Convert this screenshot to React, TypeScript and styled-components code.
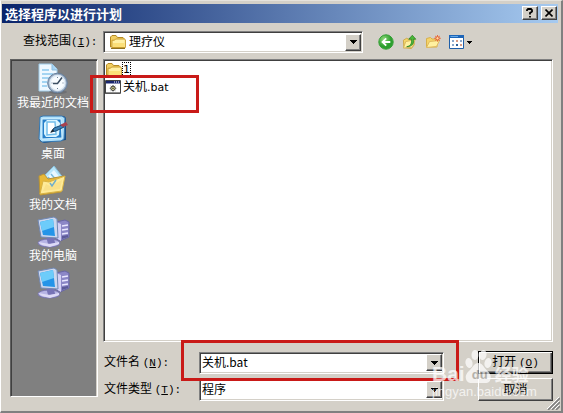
import React from "react";
import styled, { createGlobalStyle } from "styled-components";

const cjk = '"Noto Sans CJK SC", sans-serif';
const face = "#d4d0c8";

const GlobalStyle = createGlobalStyle`
  * { box-sizing: border-box; }
  body { margin: 0; background: ${face}; font: 12px/16px ${cjk}; color: #000; }
  button, input, select { font: inherit; color: inherit; border-radius: 0; }
`;

const Dialog = styled.main`
  position: relative;
  display: flex;
  flex-direction: column;
  min-height: 100vh;
  padding: 2px 1px 0 0;
  background: ${face};
  border: 1px solid;
  border-color: #e6e3dd #808080 #808080 #fff;
  border-right-width: 2px;
  border-bottom-width: 2px;
`;

const TitleBar = styled.header`
  display: flex;
  align-items: center;
  gap: 3px;
  height: 19px;
  margin: 1px 2px 0 1px;
  padding: 0 1px 0 3px;
  background: linear-gradient(90deg, #0a246a, #a6caf0);
`;

const Title = styled.h1`
  flex: 1;
  margin: 0;
  font-size: 13px;
  line-height: 17px;
  font-weight: 700;
  color: #fff;
`;

const CaptionButton = styled.button`
  display: grid;
  place-items: center;
  width: 16px;
  height: 14px;
  margin-bottom: 1px;
  padding: 0;
  background: ${face};
  border: 1px solid;
  border-color: #fff #404040 #404040 #fff;
  box-shadow: inset -1px -1px #808080;
`;

const Toolbar = styled.div`
  display: flex;
  align-items: center;
  padding: 8px 10px 6px 22px;
`;

const Mono = styled.span`
  font-family: "Liberation Mono", monospace;
  font-size: 11px;
`;

const Label = styled.label<{ $width?: number }>`
  flex: none;
  width: ${(p) => (p.$width ? `${p.$width}px` : "auto")};
  line-height: 14px;
  padding-bottom: 2px;
  white-space: nowrap;
`;

const Combo = styled.div<{ $fixed?: boolean }>`
  display: flex;
  align-items: center;
  position: relative;
  flex: ${(p) => (p.$fixed ? "0 1 260px" : "1")};
  min-width: 0;
  height: 22px;
  padding: 1px;
  background: #fff;
  border: 1px solid;
  border-color: #808080 #fff #fff #808080;
  box-shadow: inset 1px 1px #404040, inset -1px -1px ${face};
`;

const comboText = `
  flex: 1;
  min-width: 0;
  height: 18px;
  border: 0;
  padding: 0 1px 2px;
  background: transparent;
  outline: 0;
  appearance: none;
`;
const ComboSelect = styled.select`${comboText}`;
const ComboInput = styled.input`${comboText}`;

const ComboIcon = styled.span`
  display: flex;
  padding: 0 2px 0 4px;
`;

const DropButton = styled.button`
  display: grid;
  place-items: center;
  flex: none;
  width: 16px;
  height: 17px;
  padding: 0;
  background: ${face};
  border: 1px solid;
  border-color: #fff #404040 #404040 #fff;
  box-shadow: inset -1px -1px #808080;
`;

const Tools = styled.nav`
  display: flex;
  align-items: center;
  gap: 8px;
  margin-left: 15px;
`;

const ToolButton = styled.button`
  display: flex;
  align-items: center;
  gap: 3px;
  padding: 0;
  border: 0;
  background: none;
`;

const Body = styled.div`
  display: flex;
  flex: 1;
  gap: 5px;
  padding: 0 7px 10px 9px;
`;

const Places = styled.nav`
  display: flex;
  flex-direction: column;
  align-items: center;
  flex: none;
  gap: 5px;
  width: 88px;
  margin-bottom: 4px;
  padding: 3px 2px 0 0;
  background: #808080;
  border: 1px solid;
  border-color: #606060 #fff #fff #606060;
  box-shadow: inset 1px 1px #404040, inset -1px 0 ${face};
`;

const Place = styled.button`
  display: flex;
  flex-direction: column;
  align-items: center;
  padding: 0;
  line-height: 14px;
  color: #fff;
  border: 0;
  background: none;
  white-space: nowrap;
`;

const Main = styled.div`
  display: flex;
  flex: 1;
  flex-direction: column;
  gap: 9px;
  min-width: 0;
`;

const FileList = styled.ul`
  flex: 1;
  margin: 0;
  padding: 1px;
  list-style: none;
  background: #fff;
  border: 1px solid;
  border-color: #808080 #fff #fff #808080;
  box-shadow: inset 1px 1px #404040, inset -1px -1px ${face};
`;

const FileRow = styled.li`
  display: flex;
  align-items: center;
  height: 17px;
`;

const FileName = styled.span<{ $focused?: boolean }>`
  padding: 0 1px;
  line-height: 15px;
  font-family: "DejaVu Sans", ${cjk};
  font-size: 11px;
  outline: ${(p) => (p.$focused ? "1px dotted #000" : "none")};
  outline-offset: -1px;
`;

const Hanzi = styled.span`
  font-family: ${cjk};
  font-size: 12px;
`;

const Form = styled.form`
  display: flex;
  flex-direction: column;
  gap: 4px;
`;

const Field = styled.div`
  display: flex;
  align-items: center;
  height: 23px;
  padding-left: 1px;
`;

const PushButton = styled.button<{ $primary?: boolean }>`
  flex: none;
  width: 75px;
  height: 23px;
  margin-left: 34px;
  padding: 0 0 2px;
  line-height: 14px;
  background: ${face};
  border: 1px solid;
  border-color: ${(p) => (p.$primary ? "#000" : "#fff #404040 #404040 #fff")};
  box-shadow: ${(p) =>
    p.$primary
      ? "inset 1px 1px #fff, inset -1px -1px #404040, inset -2px -2px #808080"
      : "inset -1px -1px #808080"};
`;

const Grip = styled.svg`
  position: absolute;
  right: 1px;
  bottom: 1px;
`;

const Highlight = styled.div<{ $x: number; $y: number; $w: number; $h: number }>`
  position: absolute;
  left: ${(p) => p.$x}px;
  top: ${(p) => p.$y}px;
  width: ${(p) => p.$w}px;
  height: ${(p) => p.$h}px;
  border: 3px solid #c91a18;
  pointer-events: none;
`;

const Watermark = styled.div`
  position: absolute;
  right: 28px;
  bottom: 12px;
  width: 101px;
  color: #fff;
  opacity: 0.72;
  pointer-events: none;
  white-space: nowrap;
`;

const Brand = styled.div`
  display: flex;
  align-items: flex-end;
  height: 35px;
  font: 700 21px/20px "Liberation Sans", sans-serif;
`;

const BrandHanzi = styled.span`
  margin-left: 3px;
  font: 700 17px/20px ${cjk};
`;

const Paw = styled.div`
  position: relative;
  width: 27px;
  height: 35px;
`;

const PawText = styled.span`
  position: absolute;
  left: 7px;
  bottom: 1px;
  color: #aaa69f;
  font-size: 13px;
  line-height: 16px;
`;

const Site = styled.div`
  font: 13px/15px "Liberation Sans", sans-serif;
`;

const Arrow = ({ small }: { small?: boolean }) => (
  <svg width={small ? 5 : 7} height={small ? 3 : 4} viewBox="0 0 7 4" shapeRendering="crispEdges">
    <path d="M0 0h7v1H6v1H5v1H4v1H3V3H2V2H1V1H0z" />
  </svg>
);

const FolderIcon = () => (
  <svg width="17" height="16" viewBox="0 0 17 16">
    <path d="M1.500 13V3l1.500-1.500h4L8.500 3.500h5.500l1 1V13z" fill="#f2cf63" stroke="#b58a24" />
    <path d="M3 13V6.200h2.500l1-1.200h9l.9.9v7.600H3z" fill="#fff0a4" stroke="#c99c2f" />
    <path d="M4 9h11.500v4H4z" fill="#fbdf78" />
    <path d="M2 14.500h14" stroke="#8e711f" />
  </svg>
);

const BatchIcon = () => (
  <svg width="17" height="14" viewBox="0 0 17 14">
    <path d="M.5.5h15v12.500H.5z" fill="#fff" stroke="#444" />
    <path d="M1 1h14v2.500H1z" fill="#18256e" />
    <path d="M9 2h1m1 0h1m1 0h1" stroke="#fff" />
    <path d="M0 13.300h15.500V1" stroke="#444" fill="none" />
    <circle cx="8" cy="8.300" r="2.200" fill="#e1dd98" stroke="#333" />
    <path d="M8 5v1m0 4.600v1M4.700 8.300h1m4.600 0h1M5.700 6l.6.600m3.400 3.400.6.600m0-4.600-.6.600M6.300 10l-.6.600" stroke="#444" strokeWidth=".8" />
    <circle cx="8" cy="8.300" r=".8" fill="#222" />
  </svg>
);

const BackIcon = () => (
  <svg width="16" height="16" viewBox="0 0 16 16">
    <defs>
      <radialGradient id="green" cx=".35" cy=".3">
        <stop stopColor="#8ed77a" />
        <stop offset="1" stopColor="#2c9f2d" />
      </radialGradient>
    </defs>
    <circle cx="8" cy="8" r="7.200" fill="url(#green)" stroke="#36a037" />
    <path d="M12.300 8H4.800M8.200 4.300 4.500 8l3.700 3.700" fill="none" stroke="#fff" strokeWidth="1.800" />
  </svg>
);

const UpIcon = () => (
  <svg width="15" height="16" viewBox="0 0 16 16">
    <path d="M1.500 6 5 4l2 1 6-1v7l-3 4-8-1z" fill="#f5d668" stroke="#cca747" />
    <path d="m1.500 14.500 2.500-7L14 5.500l-3 8z" fill="#fff1a0" stroke="#d5b45a" />
    <path d="M5 13c5-1 5.500-4 5-8H7.200L11 .8 14.700 5h-2.500c.8 4-.8 8-7.200 8z" fill="#4bb939" stroke="#267f20" strokeWidth=".8" />
  </svg>
);

const NewFolderIcon = () => (
  <svg width="16" height="16" viewBox="0 0 16 16">
    <path d="M1.500 13V4.500l4-1 1.500 1.500H12V13z" fill="#f5d46a" stroke="#d7b04a" />
    <path d="m1.500 13.500 3-6 10-1-3 6z" fill="#fff0a0" stroke="#dfb95f" />
    <path d="M12.500 1v6.600M9.200 4.300h6.600M10.200 2l4.600 4.600m0-4.600-4.600 4.600" stroke="#e96a3b" />
    <circle cx="12.500" cy="4.300" r="1.700" fill="#ffd99a" stroke="#e35b31" />
  </svg>
);

const ViewsIcon = () => (
  <svg width="15" height="14" viewBox="0 0 15 14">
    <path d="M.5.5h14v13H.5z" fill="#fff" stroke="#1f5fa9" />
    <path d="M0 0h15v3H0z" fill="#1d65b8" />
    <path d="M1.500 1.500H9" stroke="#65a9e8" />
    <path d="M3 5h2v2H3zM11 5h2v2h-2zM3 9h2v2H3z" fill="#8aa8cb" />
    <path d="M7 5h2v2H7zM11 9h2v2h-2z" fill="#d89c85" />
    <path d="M7 9h2v2H7z" fill="#30619a" />
  </svg>
);

const RecentIcon = () => (
  <svg width="32" height="32" viewBox="0 0 32 32">
    <path d="M2 1h13l5 5v22H2z" fill="#eef8ff" stroke="#a0cdea" />
    <path d="M15 1v6h5" fill="#a5d4f4" stroke="#8dbfe2" />
    <path d="M5 7h7M5 11h11M5 15h8M5 19h5M5 23h5" stroke="#8ac7ee" strokeWidth="1.500" />
    <ellipse cx="21" cy="29" rx="9" ry="2" fill="#5b6068" opacity=".5" />
    <circle cx="20.500" cy="20" r="9.800" fill="#9aadc4" stroke="#657f9c" />
    <circle cx="20.500" cy="20" r="7.500" fill="#f8fcff" stroke="#dfebf5" strokeWidth="1.500" />
    <path d="m25 14.500-4.500 6H16" fill="none" stroke="#3b4e62" strokeWidth="1.500" />
    <path d="M20.500 14v1m0 10v1m-6-6h1m10 0h1" stroke="#6b8196" />
  </svg>
);

const DesktopIcon = () => (
  <svg width="32" height="32" viewBox="0 0 32 32">
    <path d="m4 3 23-1 2 2v22l-22 3-4-2z" fill="#174f87" />
    <path d="m3 3 3-1h19l3 2-1 21-3 2-19 1-3-3z" fill="#b1e1fb" stroke="#3477b1" />
    <path d="M5 5h19l1 19-20 1z" fill="#257fc9" stroke="#d5f1ff" />
    <path d="m7 9 3-3h10l3 3-1 12-3 2H9l-2-3z" fill="#d9f4ff" />
    <path d="M10 8h8l1 12-9 1z" fill="#fff" stroke="#71bdea" strokeWidth="1.500" />
    <path d="m14 18 3-4 8-3 2 2-8 4z" fill="#3d82b7" stroke="#174a74" />
    <path d="m23 11 6-3 2 3-5 2z" fill="#a9404d" />
    <path d="m13 19 3-4 1 2z" fill="#222" />
  </svg>
);

const DocumentsIcon = () => (
  <svg width="32" height="32" viewBox="0 0 32 32">
    <path d="m5 13 12-12 10 13-8 11z" fill="#b6e5fa" stroke="#88bfdc" />
    <path d="m10 12 7-7 7 9-7 8z" fill="#e9f8ff" />
    <path d="m14 9 6 7M11 12l6 7" stroke="#7bbbdc" strokeWidth="1.500" />
    <path d="m2 11 5-2 4 5 16-3-3 16-21 3z" fill="#e8b938" stroke="#b99436" />
    <path d="m3 29 3-13 6 1 16-6-3 15z" fill="#ffeb98" stroke="#d9b344" />
    <path d="m6 26 3-7 4 2 12-6-2 9z" fill="#fae18a" />
    <path d="m13 18 2 3 4-6" fill="none" stroke="#71aecb" strokeWidth="1.500" />
  </svg>
);

const ComputerIcon = () => (
  <svg width="34" height="32" viewBox="0 0 34 32">
    <path d="m20 6 9-2 4 2v15l-9 4-5-3z" fill="#8c87c7" stroke="#6866a5" />
    <path d="m20 6 5 2v17l-5-3z" fill="#d4d1f5" />
    <path d="m26 10 6-1M26 14l6-1M26 18l6-1" stroke="#e9e7ff" strokeWidth="1.500" />
    <path d="m26 20 6-1v2l-6 2z" fill="#5c5a98" />
    <ellipse cx="13" cy="27" rx="11" ry="4" fill="#b7b4e5" stroke="#7774b1" />
    <path d="m10 20 8 2 1 5-7 1z" fill="#7773b6" />
    <path d="m2 4 16-3 3 2 1 19-17-1z" fill="#ccd7ee" stroke="#7188b4" />
    <path d="m4 6 13-3 2 17-12-1z" fill="#2494e8" />
    <path d="m4 6 13-3 1 8L6 15z" fill="#6dccfa" />
    <path d="m2 26 4 3 8 2 9-3v-2l-9 2z" fill="#dddaf6" />
  </svg>
);

const places = [
  { label: "我最近的文档", Icon: RecentIcon },
  { label: "桌面", Icon: DesktopIcon },
  { label: "我的文档", Icon: DocumentsIcon },
  { label: "我的电脑", Icon: ComputerIcon },
  { label: "", Icon: ComputerIcon },
];

export default function App() {
  return (
    <>
      <GlobalStyle />
      <Dialog>
        <TitleBar>
          <Title>选择程序以进行计划</Title>
          <CaptionButton aria-label="帮助">
            <svg width="8" height="10" viewBox="0 0 8 10">
              <path d="M1 3V2l1-1h3l1 1v1.500L4 5v1.500M4 8v1.500" fill="none" stroke="#000" strokeWidth="1.800" />
            </svg>
          </CaptionButton>
          <CaptionButton aria-label="关闭">
            <svg width="8" height="8" viewBox="0 0 8 8">
              <path d="m.5.5 7 7m0-7-7 7" stroke="#000" strokeWidth="1.600" />
            </svg>
          </CaptionButton>
        </TitleBar>
        <Toolbar>
          <Label htmlFor="folder" $width={80}>
            查找范围<Mono>(<u>I</u>):</Mono>
          </Label>
          <Combo $fixed>
            <ComboIcon><FolderIcon /></ComboIcon>
            <ComboSelect id="folder"><option>理疗仪</option></ComboSelect>
            <DropButton aria-label="展开文件夹"><Arrow /></DropButton>
          </Combo>
          <Tools>
            <ToolButton aria-label="后退"><BackIcon /></ToolButton>
            <ToolButton aria-label="向上一级"><UpIcon /></ToolButton>
            <ToolButton aria-label="新建文件夹"><NewFolderIcon /></ToolButton>
            <ToolButton aria-label="查看"><ViewsIcon /><Arrow small /></ToolButton>
          </Tools>
        </Toolbar>
        <Body>
          <Places>
            {places.map(({ label, Icon }, i) => (
              <Place key={i} aria-label={label || "网络"}>
                <Icon />
                {label && <span>{label}</span>}
              </Place>
            ))}
          </Places>
          <Main>
            <FileList>
              <FileRow><FolderIcon /><FileName $focused>1</FileName></FileRow>
              <FileRow><BatchIcon /><FileName><Hanzi>关机</Hanzi>.bat</FileName></FileRow>
            </FileList>
            <Form onSubmit={(e) => e.preventDefault()}>
              <Field>
                <Label htmlFor="name" $width={95}>文件名 <Mono>(<u>N</u>):</Mono></Label>
                <Combo>
                  <ComboInput id="name" defaultValue="关机.bat" />
                  <DropButton type="button" aria-label="展开文件名"><Arrow /></DropButton>
                </Combo>
                <PushButton $primary>打开 <Mono>(<u>O</u>)</Mono></PushButton>
              </Field>
              <Field>
                <Label htmlFor="type" $width={95}>文件类型 <Mono>(<u>T</u>):</Mono></Label>
                <Combo>
                  <ComboSelect id="type"><option>程序</option></ComboSelect>
                  <DropButton type="button" aria-label="展开文件类型"><Arrow /></DropButton>
                </Combo>
                <PushButton type="button">取消</PushButton>
              </Field>
            </Form>
          </Main>
        </Body>
        <Grip width="13" height="13" viewBox="0 0 13 13">
          <path d="M1 13 13 1M5 13l8-8M9 13l4-4" stroke="#808080" strokeWidth="1.600" />
          <path d="M0 12 12 0M4 12l8-8M8 12l4-4" stroke="#fff" />
        </Grip>
        <Highlight $x={89} $y={74} $w={109} $h={38} />
        <Highlight $x={180} $y={339} $w={278} $h={41} />
        <Watermark>
          <Brand>
            Bai
            <Paw>
              <svg width="27" height="35" viewBox="0 0 27 35" fill="#fff">
                <ellipse cx="4" cy="14" rx="3.500" ry="5" transform="rotate(-12 4 14)" />
                <ellipse cx="10" cy="6" rx="3.500" ry="5" />
                <ellipse cx="18" cy="6" rx="3.500" ry="5" transform="rotate(12 18 6)" />
                <ellipse cx="23" cy="14" rx="3.500" ry="5" transform="rotate(12 23 14)" />
                <path d="M13.500 14c4 0 5 4 8 7 3 3 5 5 4 9-1 5-5 4-12 4s-11 1-12.500-4c-1-4 1-6 4-9s4-7 8.500-7z" />
              </svg>
              <PawText>du</PawText>
            </Paw>
            <BrandHanzi>经验</BrandHanzi>
          </Brand>
          <Site>jingyan.baidu.com</Site>
        </Watermark>
      </Dialog>
    </>
  );
}
